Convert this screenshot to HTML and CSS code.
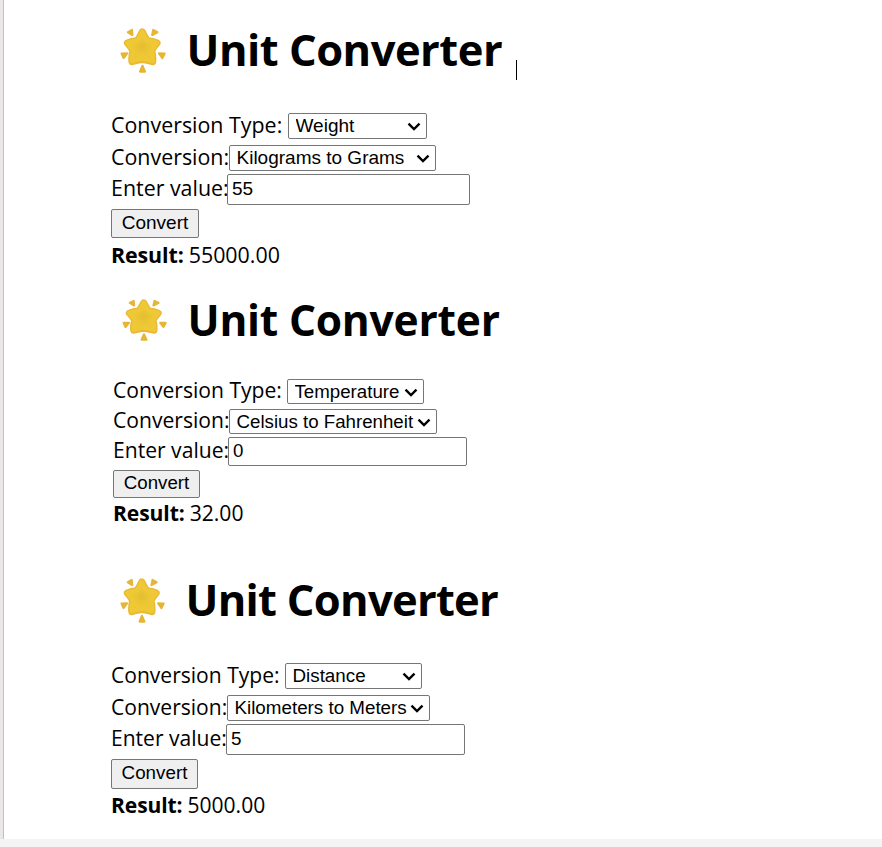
FILE: index.html
```html
<!DOCTYPE html>
<html lang="en">
<head>
<meta charset="utf-8">
<title>Unit Converter</title>
<link rel="stylesheet" href="styles.css">
</head>
<body>
<svg class="defs" aria-hidden="true">
  <defs>
    <radialGradient id="gold" cx=".5" cy=".5" r=".6">
      <stop offset="0" stop-color="#e3be32"/><stop offset=".6" stop-color="#efc934"/><stop offset="1" stop-color="#eabb34"/>
    </radialGradient>
    <symbol id="star" viewBox="0 0 46 45" preserveAspectRatio="none">
      <g fill="#e5b636" stroke="#e5b636" stroke-width="2.2" stroke-linejoin="round">
        <path d="M8 4.2 12 2 12.4 7ZM37.4 4.2 33.2 2 32.2 7ZM1.6 25.6 7.2 25.4 3.6 30ZM44.6 25.6 39 25.4 42.4 30ZM22.4 37.8 25 43.6H20Z"/>
      </g>
      <path d="M22.3 4Q24.5 9 27.4 12.8Q33 13.2 37 15Q34 18.5 31.6 22.5Q33.2 28.5 32.6 33.6Q27 31.8 22.3 31.4Q17.5 31.8 12 33.6Q11.4 28.5 13 22.5Q10.5 18.5 7.5 15Q11.5 13.2 17.2 12.8Q20 9 22.3 4Z" fill="url(#gold)" stroke="#e9b936" stroke-width="7.2" stroke-linejoin="round"/>
      <path d="M22.3 4Q24.5 9 27.4 12.8Q33 13.2 37 15Q34 18.5 31.6 22.5Q33.2 28.5 32.6 33Q27 31.2 22.3 30.6Q17.5 31.2 12 33Q11.4 28.5 13 22.5Q10.5 18.5 7.5 15Q11.5 13.2 17.2 12.8Q20 9 22.3 4Z" fill="url(#gold)" stroke="#efc836" stroke-width="4.6" stroke-linejoin="round"/>
    </symbol>
    <symbol id="chevron" viewBox="0 0 14 9">
      <path d="M1.5 1.7 7 7 12.5 1.7" fill="none" stroke="#000" stroke-width="2.4"/>
    </symbol>
  </defs>
</svg>
<main class="page">
  <section class="converter weight">
    <h1><svg class="star"><use href="#star"/></svg><span class="title">Unit Converter</span></h1>
    <div class="row type"><label for="t1">Conversion Type:</label><div class="select"><select id="t1"><option>Weight</option></select><svg><use href="#chevron"/></svg></div></div>
    <div class="row unit"><label for="u1">Conversion:</label><div class="select"><select id="u1"><option>Kilograms to Grams</option></select><svg><use href="#chevron"/></svg></div></div>
    <div class="row value"><label for="v1">Enter value:</label><input id="v1" value="55"></div>
    <div class="row action"><button>Convert</button></div>
    <div class="row result"><strong>Result:</strong><span class="number">55000.00</span></div>
    <i class="caret"></i>
  </section>
  <section class="converter temperature">
    <h1><svg class="star"><use href="#star"/></svg><span class="title">Unit Converter</span></h1>
    <div class="row type"><label for="t2">Conversion Type:</label><div class="select"><select id="t2"><option>Temperature</option></select><svg><use href="#chevron"/></svg></div></div>
    <div class="row unit"><label for="u2">Conversion:</label><div class="select"><select id="u2"><option>Celsius to Fahrenheit</option></select><svg><use href="#chevron"/></svg></div></div>
    <div class="row value"><label for="v2">Enter value:</label><input id="v2" value="0"></div>
    <div class="row action"><button>Convert</button></div>
    <div class="row result"><strong>Result:</strong><span class="number">32.00</span></div>
  </section>
  <section class="converter distance">
    <h1><svg class="star"><use href="#star"/></svg><span class="title">Unit Converter</span></h1>
    <div class="row type"><label for="t3">Conversion Type:</label><div class="select"><select id="t3"><option>Distance</option></select><svg><use href="#chevron"/></svg></div></div>
    <div class="row unit"><label for="u3">Conversion:</label><div class="select"><select id="u3"><option>Kilometers to Meters</option></select><svg><use href="#chevron"/></svg></div></div>
    <div class="row value"><label for="v3">Enter value:</label><input id="v3" value="5"></div>
    <div class="row action"><button>Convert</button></div>
    <div class="row result"><strong>Result:</strong><span class="number">5000.00</span></div>
  </section>
</main>
</body>
</html>
```
FILE: styles.css
```css
* { box-sizing: border-box; }
body { margin: 0; height: 847px; overflow: hidden; background: #f4f4f4; color: #000; font-family: "Open Sans", "Noto Sans", sans-serif; }
.defs { position: absolute; width: 0; height: 0; }
.page { height: 839px; background: #fff; border-left: 1px solid #c5c0bf; margin-left: 3px; box-shadow: -3px 0 #ebe7e6; }

.converter { position: relative; display: grid; }
.weight { font-size: 21.4px; grid-template-rows: 110px 32px 32px 31px 37px 28px; padding-left: 107px; --star-w: 46px; --star-h: 45px; --h: 26px; --type-label: 177px; --type-w: 139px; --unit-label: 118px; --unit-w: 207px; --value-label: 116px; --input-w: 243px; --input-h: 31px; --button-w: 88px; --button-h: 29px; --control: 19px; }
.temperature { font-size: 21.1px; grid-template-rows: 107px 29px 31px 29px 36px 24px; padding-left: 109px; --star-w: 45px; --star-h: 42px; --h: 25px; --type-label: 174px; --type-w: 137px; --unit-label: 116px; --unit-w: 208px; --value-label: 115px; --input-w: 239px; --input-h: 29px; --button-w: 87px; --button-h: 28px; --control: 18.7px; }
.distance { font-size: 21.05px; grid-template-rows: 134px 32px 32px 31px 38px 27px; padding-left: 107px; --star-w: 45px; --star-h: 45px; --h: 26px; --type-label: 174px; --type-w: 137px; --unit-label: 116px; --unit-w: 203px; --value-label: 115px; --input-w: 239px; --input-h: 31px; --button-w: 87px; --button-h: 30px; --control: 18.8px; }

h1 { display: flex; align-items: center; height: 48px; margin: 26px 0 0 8.5px; font-size: 43.5px; line-height: 48px; font-weight: 700; white-space: nowrap; letter-spacing: -.5px; }
.temperature h1 { font-size: 42.5px; letter-spacing: -.22px; }
.distance h1 { margin-top: 50px; letter-spacing: -.72px; }
.star { width: var(--star-w); height: var(--star-h); margin-right: 21px; flex: none; }

.row { display: flex; align-items: center; white-space: nowrap; }
label { flex: none; line-height: 28px; padding-bottom: 3px; }
.type label { width: var(--type-label); }
.unit label { width: var(--unit-label); }
.value label { width: var(--value-label); }
.select { position: relative; height: var(--h); }
.type .select { width: var(--type-w); }
.unit .select { width: var(--unit-w); }
.select svg { position: absolute; right: 6px; top: 9px; width: 14px; height: 9px; pointer-events: none; }
select, input, button { margin: 0; border: 1px solid #767676; border-radius: 2px; background: #fff; color: #000; font-family: "Liberation Sans", Arial, sans-serif; font-size: var(--control); }
select { appearance: none; display: block; width: 100%; height: 100%; padding: 0 0 1px 6.5px; }
input { width: var(--input-w); height: var(--input-h); padding: 0 4px 1px; outline: none; }
button { width: var(--button-w); height: var(--button-h); padding: 0 0 2px; background: #efefef; }
.result { padding-bottom: 3px; }
.result strong { margin-right: 5px; letter-spacing: -.1px; }
.caret { position: absolute; left: 512px; top: 60px; width: 1px; height: 20px; background: #000; }
```
